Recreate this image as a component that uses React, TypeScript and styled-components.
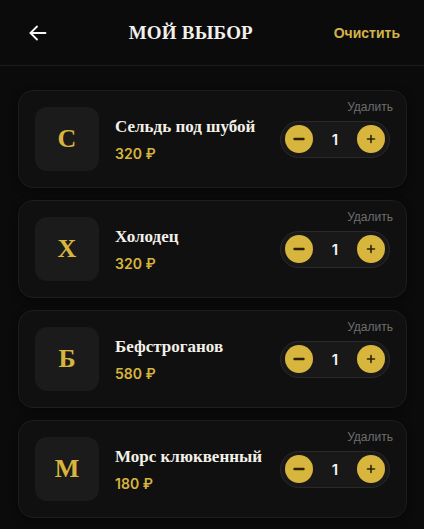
import { createGlobalStyle } from 'styled-components';
import styled from 'styled-components';

const GOLD = '#d8b53c';

const GlobalStyle = createGlobalStyle`
  html, body {
    margin: 0;
    padding: 0;
    background: #0b0b0b;
  }
  body {
    font-family: 'Liberation Sans', Arial, sans-serif;
    color: #f2f0ea;
  }
`;

const Page = styled.div`
  width: 424px;
  min-height: 529px;
  background: #0b0b0b;
`;

const Header = styled.header`
  height: 66px;
  box-sizing: border-box;
  display: flex;
  align-items: center;
  justify-content: space-between;
  padding: 0 24px 0 28px;
  border-bottom: 1px solid #1c1c1c;
`;

const BackButton = styled.button`
  width: 20px;
  height: 20px;
  padding: 0;
  border: 0;
  background: none;
  color: #f5f5f5;
  display: flex;
  align-items: center;
  justify-content: center;
  cursor: pointer;
`;

const Title = styled.h1`
  margin: 0;
  font-family: 'Liberation Serif', 'Times New Roman', serif;
  font-weight: 700;
  font-size: 19px;
  letter-spacing: 0.2px;
  color: #f2f0ea;
`;

const ClearButton = styled.button`
  border: 0;
  background: none;
  padding: 0;
  font-family: 'Liberation Sans', Arial, sans-serif;
  font-weight: 700;
  font-size: 14px;
  color: #d4b34a;
  cursor: pointer;
`;

const List = styled.main`
  display: flex;
  flex-direction: column;
  gap: 12px;
  padding: 24px 17px 24px 18px;
`;

const Card = styled.article`
  position: relative;
  display: flex;
  align-items: center;
  gap: 16px;
  padding: 16px;
  border: 1px solid #1d1d1d;
  border-radius: 15px;
  background: #101010;
  box-shadow: 0 2px 8px rgba(0, 0, 0, 0.45);
`;

const Avatar = styled.div`
  width: 64px;
  height: 64px;
  flex-shrink: 0;
  border-radius: 12px;
  background: #1b1b1b;
  display: flex;
  align-items: center;
  justify-content: center;
  font-family: 'Liberation Serif', 'Times New Roman', serif;
  font-weight: 700;
  font-size: 26px;
  color: ${GOLD};
`;

const Info = styled.div`
  flex: 1;
  display: flex;
  flex-direction: column;
  gap: 8px;
  min-width: 0;
`;

const Name = styled.div`
  font-family: 'Liberation Serif', 'Times New Roman', serif;
  font-weight: 700;
  font-size: 17px;
  line-height: 20px;
  color: #f3f0e8;
`;

const Price = styled.div`
  font-family: Inter, 'Liberation Sans', sans-serif;
  font-weight: 600;
  font-size: 14px;
  line-height: 17px;
  color: ${GOLD};
`;

const RemoveButton = styled.button`
  position: absolute;
  top: 9px;
  right: 13px;
  border: 0;
  background: none;
  padding: 0;
  font-family: 'Liberation Sans', Arial, sans-serif;
  font-size: 12px;
  color: #6e6e6e;
  cursor: pointer;
`;

const Stepper = styled.div`
  display: flex;
  align-items: center;
  box-sizing: border-box;
  width: 110px;
  height: 37px;
  padding: 0 4px;
  border: 1px solid #2a2a2a;
  border-radius: 999px;
  background: #181818;
`;

const StepButton = styled.button`
  width: 28px;
  height: 28px;
  flex-shrink: 0;
  padding: 0;
  border: 0;
  border-radius: 50%;
  background: ${GOLD};
  color: #2a2208;
  display: flex;
  align-items: center;
  justify-content: center;
  cursor: pointer;
`;

const Count = styled.span`
  flex: 1;
  text-align: center;
  font-family: Inter, 'Liberation Sans', sans-serif;
  font-weight: 600;
  font-size: 15px;
  color: #f2f2f2;
`;

type Item = { letter: string; name: string; price: number; qty: number };

const items: Item[] = [
  { letter: 'С', name: 'Сельдь под шубой', price: 320, qty: 1 },
  { letter: 'Х', name: 'Холодец', price: 320, qty: 1 },
  { letter: 'Б', name: 'Бефстроганов', price: 580, qty: 1 },
  { letter: 'М', name: 'Морс клюквенный', price: 180, qty: 1 },
];

function ArrowLeft() {
  return (
    <svg width="18" height="18" viewBox="0 0 18 18" fill="none" stroke="currentColor" strokeWidth="1.8" strokeLinecap="round" strokeLinejoin="round">
      <path d="M16.5 9H1.5" />
      <path d="M8 2.5L1.5 9L8 15.5" />
    </svg>
  );
}

function MinusIcon() {
  return (
    <svg width="12" height="12" viewBox="0 0 12 12" fill="none" stroke="currentColor" strokeWidth="2.4" strokeLinecap="round">
      <path d="M1.5 6h9" />
    </svg>
  );
}

function PlusIcon() {
  return (
    <svg width="10" height="10" viewBox="0 0 10 10" fill="none" stroke="currentColor" strokeWidth="1.6" strokeLinecap="round">
      <path d="M5 1.5v7M1.5 5h7" />
    </svg>
  );
}

function CartRow({ item }: { item: Item }) {
  return (
    <Card>
      <Avatar>{item.letter}</Avatar>
      <Info>
        <Name>{item.name}</Name>
        <Price>{item.price} ₽</Price>
      </Info>
      <Stepper>
        <StepButton aria-label="Меньше">
          <MinusIcon />
        </StepButton>
        <Count>{item.qty}</Count>
        <StepButton aria-label="Больше">
          <PlusIcon />
        </StepButton>
      </Stepper>
      <RemoveButton>Удалить</RemoveButton>
    </Card>
  );
}

export default function App() {
  return (
    <Page>
      <GlobalStyle />
      <Header>
        <BackButton aria-label="Назад">
          <ArrowLeft />
        </BackButton>
        <Title>МОЙ ВЫБОР</Title>
        <ClearButton>Очистить</ClearButton>
      </Header>
      <List>
        {items.map((item) => (
          <CartRow key={item.name} item={item} />
        ))}
      </List>
    </Page>
  );
}
